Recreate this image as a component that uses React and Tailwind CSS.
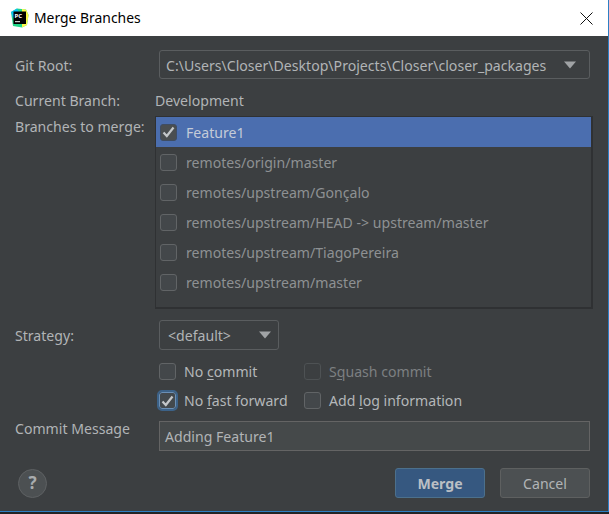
const font = { fontFamily: '"Noto Sans", "Open Sans", sans-serif' };

function Caret({ className }) {
  return (
    <svg width="14" height="8" viewBox="0 0 14 8" className={className}>
      <path d="M1 0.5 H13 L7 7.5 Z" fill="#a0a3a5" />
    </svg>
  );
}

function Check() {
  return (
    <svg width="13" height="12" viewBox="0 0 13 12">
      <path d="M1.5 6.5 L4.8 10 L11.5 1.5" fill="none" stroke="#c4c7c9" strokeWidth="2.2" />
    </svg>
  );
}

function Box({ checked, focused, disabled, selected }) {
  let cls = "w-[17px] h-[17px] rounded-[3px] border flex items-center justify-center shrink-0 ";
  if (focused) cls += "border-[#6b8fb5] bg-[#43494d] outline-2 outline-[#3c6288]";
  else if (selected) cls += "border-[#3f4d63] bg-[#4a4e50]";
  else if (disabled) cls += "border-[#4e5254] bg-[#3c3f41]";
  else cls += "border-[#616466] bg-[#43474a]";
  return <span className={cls}>{checked && <Check />}</span>;
}

function Branch({ name, selected }) {
  return (
    <div className={"h-[30px] flex items-center gap-[9px] pl-[4px] " + (selected ? "bg-[#4b6eaf] text-[#c4cbd8]" : "text-[#8e9193]")}>
      <Box checked={selected} selected={selected} />
      <span className="pt-[2px]">{name}</span>
    </div>
  );
}

function Option({ label, checked, focused, disabled, width }) {
  return (
    <label className={"flex items-center gap-2 h-[17px] " + width + (disabled ? " text-[#7d8082]" : " text-[#b4b7b9]")}>
      <Box checked={checked} focused={focused} disabled={disabled} />
      <span>{label}</span>
    </label>
  );
}

const branches = [
  "Feature1",
  "remotes/origin/master",
  "remotes/upstream/Gonçalo",
  "remotes/upstream/HEAD -> upstream/master",
  "remotes/upstream/TiagoPereira",
  "remotes/upstream/master",
];

export default function App() {
  return (
    <div style={font} className="w-[609px] h-[514px] bg-[#232425] text-[14.1px] leading-5 overflow-hidden">
      <div className="w-[609px] h-[512px] border-r border-b border-[#2d7fc4] flex flex-col">
        <div className="h-9 bg-white flex items-center justify-between pl-[10px] pr-[15px] text-[13.9px] text-black shrink-0">
          <div className="flex items-center gap-[5px]">
            <svg width="19" height="20" viewBox="0 0 19 20">
              <path d="M1 4 L7 0.5 L16 1.5 L18.5 7 L17 17 L12 19.5 L3 18 Z" fill="#21d789" />
              <path d="M12 1 L16 1.5 L18.5 7 L17 17 L12 19.5 Z" fill="#fcf84a" />
              <path d="M1 4 L7 0.5 L9 4 L3 10 Z" fill="#07c3f2" />
              <rect x="3.5" y="3.5" width="12.5" height="12.5" fill="#000" />
              <text x="4.6" y="9.6" fontSize="6" fontWeight="700" fill="#fff">PC</text>
              <rect x="5" y="13.2" width="5" height="1" fill="#fff" />
            </svg>
            <span>Merge Branches</span>
          </div>
          <svg width="13" height="13" viewBox="0 0 13 13">
            <path d="M0.5 0.5 L12.5 12.5 M12.5 0.5 L0.5 12.5" stroke="#111" strokeWidth="1" />
          </svg>
        </div>

        <div className="flex-1 bg-[#3c3f41] text-[#b1b4b6] pl-[15px] pt-[14px] flex flex-col">
          <div className="flex items-center h-[29px]">
            <span className="w-[144px] pt-[2px]">Git Root:</span>
            <div className="w-[431px] h-[29px] border border-[#5a5d5f] rounded-[3px] flex items-center justify-between pl-[6px] pr-[12px]">
              <span className="pt-[2px]">C:\Users\Closer\Desktop\Projects\Closer\closer_packages</span>
              <Caret />
            </div>
          </div>

          <div className="flex items-center h-[20px] mt-[12px]">
            <span className="w-[140px]">Current Branch:</span>
            <span>Development</span>
          </div>

          <div className="flex mt-[5px]">
            <span className="w-[140px] pt-[1px]">Branches to merge:</span>
            <div className="w-[438px] h-[193px] shrink-0 border-r-2 border-b-2 border-l border-t border-[#2f3133]">
              {branches.map((b, i) => (
                <Branch key={b} name={b} selected={i === 0} />
              ))}
            </div>
          </div>

          <div className="flex items-center h-[30px] mt-[11px]">
            <span className="w-[144px] pt-[2px]">Strategy:</span>
            <div className="w-[120px] h-[30px] border border-[#5a5d5f] rounded-[3px] flex items-center justify-between pl-2 pr-[6px]">
              <span className="pt-[2px]">&lt;default&gt;</span>
              <Caret />
            </div>
          </div>

          <div className="pl-[144px] mt-[13px] flex flex-col gap-[12px]">
            <div className="flex">
              <Option width="w-[145px]" label={<>No <u className="underline-offset-2">c</u>ommit</>} />
              <Option disabled label={<>S<u className="underline-offset-2">q</u>uash commit</>} />
            </div>
            <div className="flex">
              <Option width="w-[145px]" checked focused label={<>No <u className="underline-offset-2">f</u>ast forward</>} />
              <Option label={<>Add <u className="underline-offset-2">l</u>og information</>} />
            </div>
          </div>

          <div className="flex mt-[12px]">
            <span className="w-[144px] -mt-[2px]">Commit Message</span>
            <div className="w-[431px] h-[30px] bg-[#45494a] border border-[#646464] flex items-center pl-[5px]">
              <span className="pt-[1px]">Adding Feature1</span>
            </div>
          </div>

          <div className="flex items-center justify-between mt-[17px] pr-[18px]">
            <div className="ml-[3px] w-[29px] h-[29px] rounded-full bg-[#4c5052] border border-[#5e6163] flex items-center justify-center font-bold text-[17px] text-[#a9acae]">
              ?
            </div>
            <div className="flex gap-[15px]">
              <button className="w-[90px] h-[30px] rounded-[3px] bg-[#365880] border border-[#4c708c] font-bold text-[#bbbfc4] pt-[1px]">
                Merge
              </button>
              <button className="w-[90px] h-[30px] rounded-[3px] bg-[#4c5052] border border-[#5e6060] text-[#b1b4b6] pt-[1px]">
                Cancel
              </button>
            </div>
          </div>
        </div>
      </div>
    </div>
  );
}
